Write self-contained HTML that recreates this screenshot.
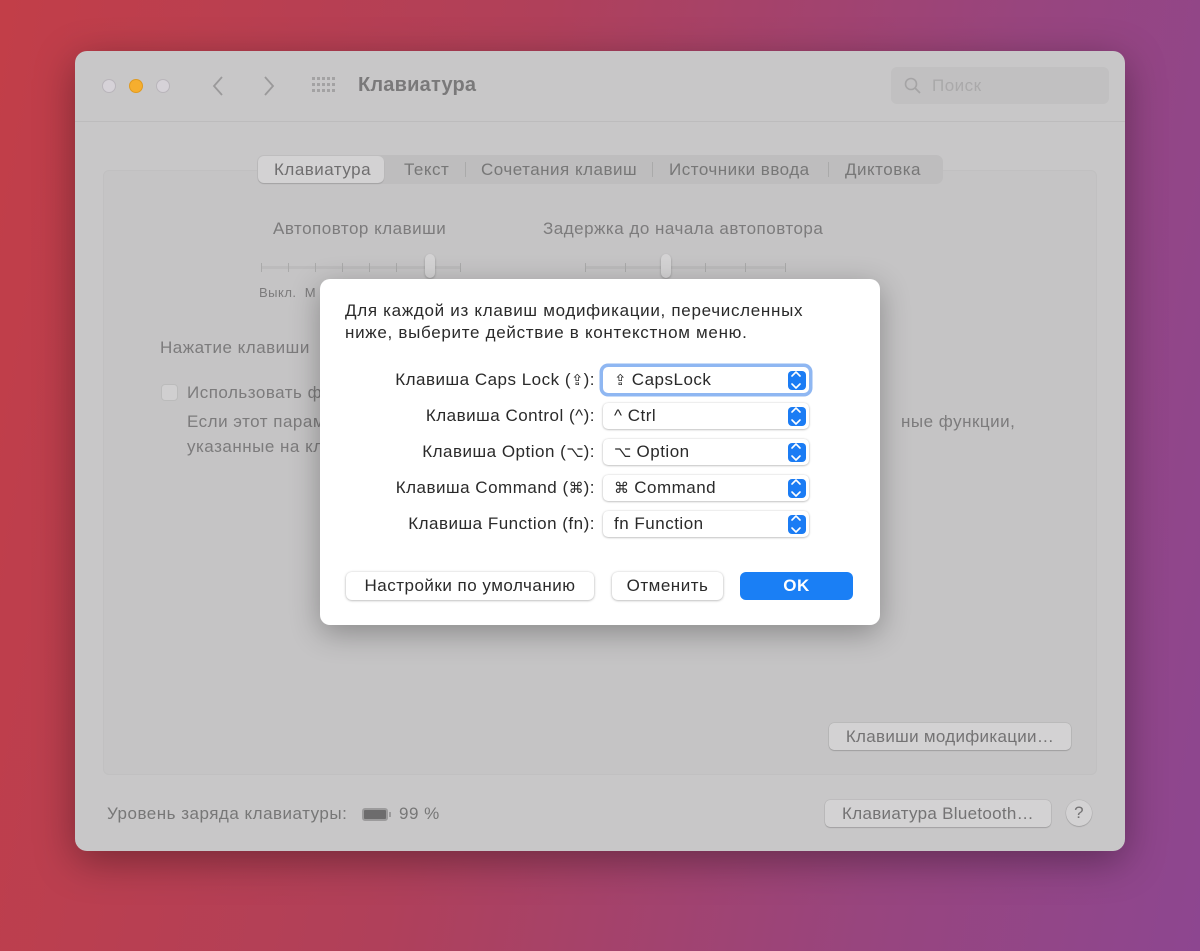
<!DOCTYPE html>
<html><head><meta charset="utf-8"><style>
*{box-sizing:border-box;margin:0;padding:0}
body{width:1200px;height:951px;overflow:hidden;font-family:"Liberation Sans","Noto Sans CJK SC",sans-serif;background:linear-gradient(100deg,#c23e48 0%,#b0405a 40%,#98457e 75%,#8d4690 100%);position:relative;letter-spacing:.5px}
.abs{position:absolute}
.win{left:75px;top:51px;width:1050px;height:800px;border-radius:12px;background:#c8c7c8;box-shadow:0 10px 40px rgba(0,0,0,.35)}
.g{color:#7c7b7c}
.tb{left:0;top:0;width:1050px;height:71px;border-bottom:1px solid #bdbcbd}
.dot{width:14px;height:14px;border-radius:50%;top:28px;border:1px solid #b9b5bb;background:#d6d2d8}
.inner{left:28px;top:119px;width:994px;height:605px;border:1px solid #c1c0c1;border-radius:6px;background:#c5c4c5}
.tabs{left:182px;top:104px;width:686px;height:29px;border-radius:7px;background:#bebdbe;font-size:17px}
.tab{position:absolute;top:5px;color:#777;line-height:20px}
.sel{left:1px;top:1px;width:126px;height:27px;border-radius:6px;background:#d3d2d3;box-shadow:0 1px 1px rgba(0,0,0,.15)}
.track{height:3px;background:#bcbbbc;border-radius:2px}
.tick{width:1px;height:9px;background:#aaa}
.btn{background:#d3d2d3;border-radius:5px;box-shadow:0 1px 1px rgba(0,0,0,.15),0 0 0 .5px rgba(0,0,0,.1);font-size:17px;color:#747374;text-align:center;line-height:27px;letter-spacing:.3px}
.dlg{left:320px;top:279px;width:560px;height:346px;background:#fff;border-radius:10px;box-shadow:0 8px 30px rgba(0,0,0,.3);color:#2a2a2a;font-size:17px}
.lbl{right:285px;width:280px;text-align:right;line-height:20px;height:20px}
.pop{left:283px;width:206px;height:26px;border-radius:5px;background:#fff;box-shadow:0 .5px 2px rgba(0,0,0,.35);padding-left:11px;line-height:26px;overflow:hidden}
.pop .ar{position:absolute;right:3px;top:4px;width:18px;height:19px;border-radius:4px;background:#1b7cf4}
.dbtn{height:28px;border-radius:6px;background:#fff;box-shadow:0 .5px 2.5px rgba(0,0,0,.35);text-align:center;line-height:28px;top:293px}
.sym{font-family:"DejaVu Sans",sans-serif;font-size:15px;line-height:20px;letter-spacing:0}
</style></head><body>
<div class="abs win">
 <div class="abs tb">
  <div class="abs dot" style="left:27px"></div>
  <div class="abs dot" style="left:54px;background:#f6ae2e;border-color:#e09a20"></div>
  <div class="abs dot" style="left:81px"></div>
  <svg class="abs" style="left:136px;top:24px" width="14" height="22"><path d="M11 2 L3 11 L11 20" stroke="#9a999a" stroke-width="1.8" fill="none"/></svg>
  <svg class="abs" style="left:187px;top:24px" width="14" height="22"><path d="M3 2 L11 11 L3 20" stroke="#9a999a" stroke-width="1.8" fill="none"/></svg>
  <svg class="abs" style="left:237px;top:26px" width="26" height="18" fill="#a3a2a3"><g id="r"><rect x="0" y="0" width="3" height="3"/><rect x="5" y="0" width="3" height="3"/><rect x="10" y="0" width="3" height="3"/><rect x="15" y="0" width="3" height="3"/><rect x="20" y="0" width="3" height="3"/></g><use href="#r" y="6"/><use href="#r" y="12"/></svg>
  <div class="abs" style="left:283px;top:23px;font-size:20px;font-weight:bold;color:#7a797a;letter-spacing:.2px">Клавиатура</div>
  <div class="abs" style="left:816px;top:16px;width:218px;height:37px;border-radius:6px;background:#c1c0c1"></div>
  <svg class="abs" style="left:829px;top:26px" width="18" height="18"><circle cx="7" cy="7" r="5.5" stroke="#a5a4a5" stroke-width="1.6" fill="none"/><path d="M11 11 L16 16" stroke="#a5a4a5" stroke-width="1.8"/></svg>
  <div class="abs" style="left:857px;top:25px;font-size:17px;color:#aaa9aa">Поиск</div>
 </div>
 <div class="abs inner"></div>
 <div class="abs tabs">
  <div class="abs sel"></div>
  <div class="tab" style="left:17px;color:#6f6e6f">Клавиатура</div>
  <div class="tab" style="left:147px">Текст</div>
  <div class="tab" style="left:224px">Сочетания клавиш</div>
  <div class="tab" style="left:412px">Источники ввода</div>
  <div class="tab" style="left:588px">Диктовка</div>
  <div class="abs" style="left:208px;top:7px;width:1px;height:15px;background:#aaa"></div>
  <div class="abs" style="left:395px;top:7px;width:1px;height:15px;background:#aaa"></div>
  <div class="abs" style="left:571px;top:7px;width:1px;height:15px;background:#aaa"></div>
 </div>
 <div class="abs g" style="left:198px;top:168px;font-size:17px">Автоповтор клавиши</div>
 <div class="abs g" style="left:468px;top:168px;font-size:17px">Задержка до начала автоповтора</div>
 <div class="abs track" style="left:186px;top:215px;width:200px"></div>
 <div class="abs track" style="left:510px;top:215px;width:200px"></div>
 <div class="abs tick" style="left:186px;top:212px"></div><div class="abs tick" style="left:213px;top:212px"></div><div class="abs tick" style="left:240px;top:212px"></div><div class="abs tick" style="left:267px;top:212px"></div><div class="abs tick" style="left:294px;top:212px"></div><div class="abs tick" style="left:321px;top:212px"></div><div class="abs tick" style="left:385px;top:212px"></div>
 <div class="abs tick" style="left:510px;top:212px"></div><div class="abs tick" style="left:550px;top:212px"></div><div class="abs tick" style="left:630px;top:212px"></div><div class="abs tick" style="left:670px;top:212px"></div><div class="abs tick" style="left:710px;top:212px"></div>
 <div class="abs" style="left:350px;top:203px;width:10px;height:24px;border-radius:5px;background:#d4d3d4;box-shadow:0 1px 2px rgba(0,0,0,.25)"></div>
 <div class="abs" style="left:586px;top:203px;width:10px;height:24px;border-radius:5px;background:#d4d3d4;box-shadow:0 1px 2px rgba(0,0,0,.25)"></div>
 <div class="abs g" style="left:184px;top:234px;font-size:13px">Выкл.&nbsp;&nbsp;М</div>
 <div class="abs g" style="left:85px;top:287px;font-size:17px">Нажатие клавиши</div>
 <div class="abs" style="left:86px;top:333px;width:17px;height:17px;border-radius:4px;background:#d0cfd0;border:1px solid #bbb"></div>
 <div class="abs g" style="left:112px;top:332px;font-size:17px">Использовать ф</div>
 <div class="abs g" style="left:112px;top:358px;font-size:17px;line-height:25px">Если этот парам<br>указанные на кл</div>
 <div class="abs g" style="left:826px;top:358px;font-size:17px;line-height:25px">ные функции,</div>
 <div class="abs btn" style="left:754px;top:672px;width:242px;height:27px">Клавиши модификации…</div>
 <div class="abs g" style="left:32px;top:753px;font-size:17px;color:#777">Уровень заряда клавиатуры:</div>
 <div class="abs" style="left:287px;top:757px;width:26px;height:13px;border-radius:3px;background:#6d6c6d;border:2px solid #9c9b9c"></div>
 <div class="abs" style="left:314px;top:761px;width:2px;height:5px;background:#9c9b9c"></div>
 <div class="abs g" style="left:324px;top:753px;font-size:17px;color:#777">99 %</div>
 <div class="abs btn" style="left:750px;top:749px;width:226px;height:27px">Клавиатура Bluetooth…</div>
 <div class="abs btn" style="left:991px;top:749px;width:26px;height:26px;border-radius:50%;line-height:26px">?</div>
</div>
<div class="abs dlg">
 <div class="abs" style="left:25px;top:21px;line-height:22px;letter-spacing:.7px;white-space:nowrap">Для каждой из клавиш модификации, перечисленных<br>ниже, выберите действие в контекстном меню.</div>
 <div class="abs lbl" style="top:91px">Клавиша Caps Lock (<span class="sym">⇪</span>):</div>
 <div class="abs lbl" style="top:127px">Клавиша Control (^):</div>
 <div class="abs lbl" style="top:163px">Клавиша Option (<span class="sym">⌥</span>):</div>
 <div class="abs lbl" style="top:199px">Клавиша Command (<span class="sym">⌘</span>):</div>
 <div class="abs lbl" style="top:235px">Клавиша Function (fn):</div>
 <div class="abs pop" style="top:88px;box-shadow:0 0 0 3.5px #8fb7f2,0 .5px 2px rgba(0,0,0,.35)"><span class="sym">⇪</span> CapsLock<div class="ar"></div></div>
 <div class="abs pop" style="top:124px">^ Ctrl<div class="ar"></div></div>
 <div class="abs pop" style="top:160px"><span class="sym">⌥</span> Option<div class="ar"></div></div>
 <div class="abs pop" style="top:196px"><span class="sym">⌘</span> Command<div class="ar"></div></div>
 <div class="abs pop" style="top:232px">fn Function<div class="ar"></div></div>
 <div class="abs dbtn" style="left:26px;width:248px">Настройки по умолчанию</div>
 <div class="abs dbtn" style="left:292px;width:111px">Отменить</div>
 <div class="abs dbtn" style="left:420px;width:113px;background:#1a7ff5;color:#fff;font-weight:bold;box-shadow:none">OK</div>
</div>
<svg class="abs" style="left:0;top:0;pointer-events:none" width="1200" height="951">
 <g fill="none" stroke="#fff" stroke-width="1.6" stroke-linecap="round" stroke-linejoin="round">
  <path d="M792 376 l4 -4 l4 4 M792 384 l4 4 l4 -4"/>
  <path d="M792 412 l4 -4 l4 4 M792 420 l4 4 l4 -4"/>
  <path d="M792 448 l4 -4 l4 4 M792 456 l4 4 l4 -4"/>
  <path d="M792 484 l4 -4 l4 4 M792 492 l4 4 l4 -4"/>
  <path d="M792 520 l4 -4 l4 4 M792 528 l4 4 l4 -4"/>
 </g>
</svg>
</body></html>
